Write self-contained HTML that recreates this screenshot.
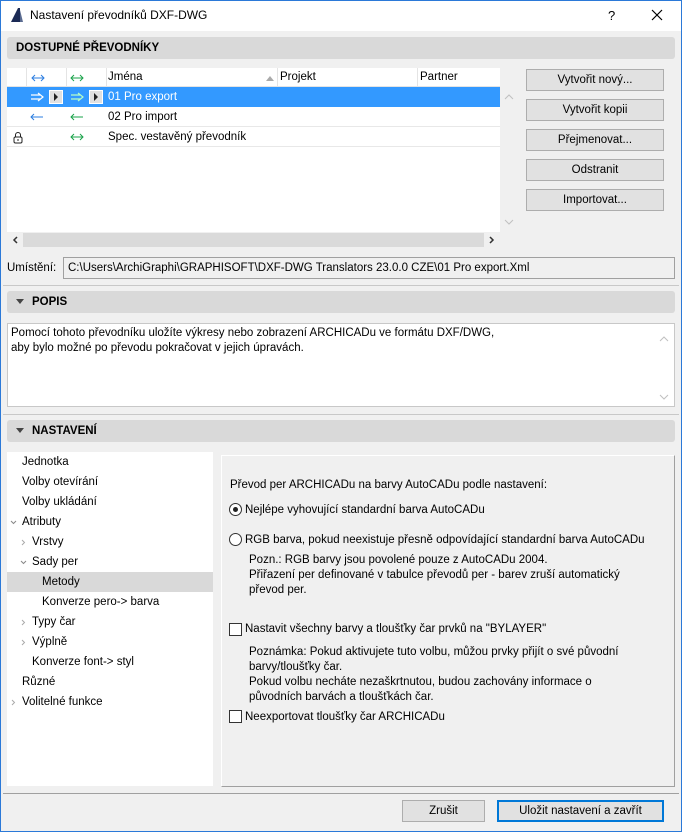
<!DOCTYPE html>
<html><head><meta charset="utf-8"><style>
*{box-sizing:border-box;margin:0;padding:0}
body{width:682px;height:832px;background:#f0f0f0;font-family:"Liberation Sans",sans-serif;font-size:11.5px;color:#000;position:relative;overflow:hidden}
.a{position:absolute;white-space:nowrap}
.win{position:absolute;left:0;top:0;width:682px;height:832px;border:1px solid #2b79d8;pointer-events:none}
.hdr{position:absolute;left:7px;width:668px;height:22px;background:#d9d9d9;border-radius:3px;font-weight:bold;font-size:11.5px;line-height:22px;padding-left:9px}
.hdr .tri{display:inline-block;width:0;height:0;border-left:4px solid transparent;border-right:4px solid transparent;border-top:5px solid #444;margin-right:8px;vertical-align:1px}
.btn{position:absolute;left:526px;width:138px;height:22px;background:#e1e1e1;border:1px solid #adadad;text-align:center;line-height:20px}
.row{position:absolute;left:7px;width:493px;height:20px;line-height:20px;border-bottom:1px solid #e8e8e8}
.tree div{position:absolute;height:20px;line-height:20px;white-space:nowrap}
.rb{display:inline-block;width:13px;height:13px;border:1px solid #333;border-radius:50%;vertical-align:-3px;margin-right:3px;position:relative;background:#fff}
.cb{position:absolute;width:13px;height:13px;border:1px solid #333;background:#fff}
svg.ar{position:absolute}
</style></head><body>
<div class="a" style="left:0;top:0;width:682px;height:31px;background:#fff"></div>
<svg class="a" style="left:9px;top:7px" width="16" height="16"><path d="M2 15 L9 1 L11 1 L11 15 Z" fill="#1b2a55"/><path d="M11 3 L14 15 L11 15Z" fill="#5a6b90"/></svg>
<div class="a" style="left:30px;top:8px;font-size:12px">Nastavení převodníků DXF-DWG</div>
<div class="a" style="left:608px;top:8px;font-size:13px">?</div>
<svg class="a" style="left:651px;top:9px" width="12" height="12"><path d="M1 1L11 11M11 1L1 11" stroke="#000" stroke-width="1.2"/></svg>

<div class="hdr" style="top:37px">DOSTUPNÉ PŘEVODNÍKY</div>

<div class="a" style="left:7px;top:68px;width:493px;height:164px;background:#fff"></div>
<div class="a" style="left:7px;top:68px;width:493px;height:19px;border-bottom:1px solid #e4e4e4"></div>
<div class="a" style="left:26px;top:68px;width:1px;height:19px;background:#e4e4e4"></div>
<div class="a" style="left:66px;top:68px;width:1px;height:19px;background:#e4e4e4"></div>
<div class="a" style="left:106px;top:68px;width:1px;height:19px;background:#e4e4e4"></div>
<div class="a" style="left:277px;top:68px;width:1px;height:19px;background:#e4e4e4"></div>
<div class="a" style="left:417px;top:68px;width:1px;height:19px;background:#e4e4e4"></div>
<svg class="ar" style="left:31px;top:74px" width="14" height="8"><path d="M1 4H13M4 1L1 4L4 7M10 1L13 4L10 7" stroke="#2b7de0" fill="none"/></svg>
<svg class="ar" style="left:70px;top:74px" width="14" height="8"><path d="M1 4H13M4 1L1 4L4 7M10 1L13 4L10 7" stroke="#1aa34a" fill="none"/></svg>
<div class="a" style="left:108px;top:71px">Jména</div>
<div class="a" style="left:266px;top:76px;width:0;height:0;border-left:4px solid transparent;border-right:4px solid transparent;border-bottom:5px solid #aaa"></div>
<div class="a" style="left:280px;top:71px">Projekt</div>
<div class="a" style="left:420px;top:71px">Partner</div>

<div class="row" style="top:87px;background:#3399ff;color:#fff;border:none">
<svg class="ar" style="left:23px;top:5px" width="15" height="10"><path d="M1 3H10M1 7H10M8 1L13 5L8 9" stroke="#fff" fill="none" stroke-width="1.2"/></svg>
<span class="a" style="left:42px;top:3px;width:14px;height:14px;background:#e0e0e0;border:1px solid #fff"></span>
<span class="a" style="left:47px;top:6px;width:0;height:0;border-top:4px solid transparent;border-bottom:4px solid transparent;border-left:4px solid #222"></span>
<svg class="ar" style="left:63px;top:5px" width="15" height="10"><path d="M1 3H10M1 7H10M8 1L13 5L8 9" stroke="#b6ffc8" fill="none" stroke-width="1.2"/></svg>
<span class="a" style="left:82px;top:3px;width:14px;height:14px;background:#e0e0e0;border:1px solid #fff"></span>
<span class="a" style="left:87px;top:6px;width:0;height:0;border-top:4px solid transparent;border-bottom:4px solid transparent;border-left:4px solid #222"></span>
<span class="a" style="left:101px;top:0">01 Pro export</span></div>
<div class="row" style="top:107px">
<svg class="ar" style="left:23px;top:6px" width="14" height="8"><path d="M1 4H13M4 1L1 4L4 7" stroke="#2b7de0" fill="none"/></svg>
<svg class="ar" style="left:63px;top:6px" width="14" height="8"><path d="M1 4H13M4 1L1 4L4 7" stroke="#1aa34a" fill="none"/></svg>
<span class="a" style="left:101px">02 Pro import</span></div>
<div class="row" style="top:127px">
<svg class="ar" style="left:6px;top:4px" width="10" height="13"><path d="M2.5 6V4A2.5 2.5 0 0 1 7.5 4V6" stroke="#222" fill="none"/><rect x="1" y="6" width="8" height="6" rx="1.5" fill="#fff" stroke="#222"/><path d="M5 8V10" stroke="#222"/></svg>
<svg class="ar" style="left:63px;top:6px" width="14" height="8"><path d="M1 4H13M4 1L1 4L4 7M10 1L13 4L10 7" stroke="#1aa34a" fill="none"/></svg>
<span class="a" style="left:101px">Spec. vestavěný převodník</span></div>
<svg class="ar" style="left:504px;top:94px" width="10" height="6"><path d="M1 5L5 1L9 5" stroke="#c0c0c0" fill="none"/></svg>
<svg class="ar" style="left:504px;top:219px" width="10" height="6"><path d="M1 1L5 5L9 1" stroke="#c0c0c0" fill="none"/></svg>
<div class="a" style="left:7px;top:233px;width:493px;height:14px;background:#dadada"></div>
<div class="a" style="left:7px;top:233px;width:16px;height:14px;background:#f0f0f0"></div>
<svg class="ar" style="left:12px;top:236px" width="6" height="8"><path d="M5 1L2 4L5 7" stroke="#333" fill="none" stroke-width="1.5"/></svg>
<div class="a" style="left:484px;top:233px;width:16px;height:14px;background:#f0f0f0"></div>
<svg class="ar" style="left:489px;top:236px" width="6" height="8"><path d="M1 1L4 4L1 7" stroke="#333" fill="none" stroke-width="1.5"/></svg>

<div class="btn" style="top:69px">Vytvořit nový...</div>
<div class="btn" style="top:99px">Vytvořit kopii</div>
<div class="btn" style="top:129px">Přejmenovat...</div>
<div class="btn" style="top:159px">Odstranit</div>
<div class="btn" style="top:189px">Importovat...</div>

<div class="a" style="left:7px;top:262px">Umístění:</div>
<div class="a" style="left:63px;top:257px;width:612px;height:22px;border:1px solid #a0a0a0;background:#f0f0f0;line-height:20px;padding-left:4px">C:\Users\ArchiGraphi\GRAPHISOFT\DXF-DWG Translators 23.0.0 CZE\01 Pro export.Xml</div>
<div class="a" style="left:3px;top:285px;width:676px;height:1px;background:#c8c8c8"></div>

<div class="hdr" style="top:291px"><span class="tri"></span>POPIS</div>
<div class="a" style="left:7px;top:323px;width:668px;height:84px;background:#fff;border:1px solid #c8c8c8;padding:2px 0 0 3px;line-height:15px">Pomocí tohoto převodníku uložíte výkresy nebo zobrazení ARCHICADu ve formátu DXF/DWG,<br>aby bylo možné po převodu pokračovat v jejich úpravách.</div>
<svg class="ar" style="left:659px;top:336px" width="10" height="6"><path d="M1 5L5 1L9 5" stroke="#c0c0c0" fill="none"/></svg>
<svg class="ar" style="left:659px;top:394px" width="10" height="6"><path d="M1 1L5 5L9 1" stroke="#c0c0c0" fill="none"/></svg>
<div class="a" style="left:3px;top:414px;width:676px;height:1px;background:#c8c8c8"></div>

<div class="hdr" style="top:420px"><span class="tri"></span>NASTAVENÍ</div>

<div class="a tree" style="left:7px;top:452px;width:206px;height:334px;background:#fff">
<div style="left:15px;top:0">Jednotka</div>
<div style="left:15px;top:20px">Volby otevírání</div>
<div style="left:15px;top:40px">Volby ukládání</div>
<div style="left:15px;top:60px">Atributy</div>
<div style="left:25px;top:80px">Vrstvy</div>
<div style="left:25px;top:100px">Sady per</div>
<div style="left:0;top:120px;width:206px;background:#d9d9d9;padding-left:35px">Metody</div>
<div style="left:35px;top:140px">Konverze pero-&gt; barva</div>
<div style="left:25px;top:160px">Typy čar</div>
<div style="left:25px;top:180px">Výplně</div>
<div style="left:25px;top:200px">Konverze font-&gt; styl</div>
<div style="left:15px;top:220px">Různé</div>
<div style="left:15px;top:240px">Volitelné funkce</div>
</div>
<svg class="ar" style="left:10px;top:520px" width="7" height="5"><path d="M1 1L3.5 3.5L6 1" stroke="#888" fill="none"/></svg>
<svg class="ar" style="left:21px;top:539px" width="5" height="7"><path d="M1 1L3.5 3.5L1 6" stroke="#aaa" fill="none"/></svg>
<svg class="ar" style="left:20px;top:560px" width="7" height="5"><path d="M1 1L3.5 3.5L6 1" stroke="#888" fill="none"/></svg>
<svg class="ar" style="left:21px;top:619px" width="5" height="7"><path d="M1 1L3.5 3.5L1 6" stroke="#aaa" fill="none"/></svg>
<svg class="ar" style="left:21px;top:639px" width="5" height="7"><path d="M1 1L3.5 3.5L1 6" stroke="#aaa" fill="none"/></svg>
<svg class="ar" style="left:11px;top:699px" width="5" height="7"><path d="M1 1L3.5 3.5L1 6" stroke="#aaa" fill="none"/></svg>

<div class="a" style="left:221px;top:455px;width:454px;height:332px;border:1px solid;border-color:#fff #a0a0a0 #a0a0a0 #fff"></div>
<div class="a" style="left:230px;top:479px">Převod per ARCHICADu na barvy AutoCADu podle nastavení:</div>
<div class="a" style="left:229px;top:503px"><span class="rb"><span style="position:absolute;left:3px;top:3px;width:5px;height:5px;border-radius:50%;background:#222"></span></span>Nejlépe vyhovující standardní barva AutoCADu</div>
<div class="a" style="left:229px;top:533px"><span class="rb"></span>RGB barva, pokud neexistuje přesně odpovídající standardní barva AutoCADu</div>
<div class="a" style="left:249px;top:553px;line-height:15px">Pozn.: RGB barvy jsou povolené pouze z AutoCADu 2004.<br>Přiřazení per definované v tabulce převodů per - barev zruší automatický<br>převod per.</div>
<div class="cb" style="left:229px;top:623px"></div>
<div class="a" style="left:245px;top:623px">Nastavit všechny barvy a tloušťky čar prvků na "BYLAYER"</div>
<div class="a" style="left:249px;top:645px;line-height:15px">Poznámka: Pokud aktivujete tuto volbu, můžou prvky přijít o své původní<br>barvy/tloušťky čar.<br>Pokud volbu necháte nezaškrtnutou, budou zachovány informace o<br>původních barvách a tloušťkách čar.</div>
<div class="cb" style="left:229px;top:710px"></div>
<div class="a" style="left:245px;top:711px">Neexportovat tloušťky čar ARCHICADu</div>

<div class="a" style="left:3px;top:793px;width:676px;height:1px;background:#a0a0a0"></div>
<div class="a" style="left:402px;top:800px;width:83px;height:22px;background:#e1e1e1;border:1px solid #adadad;text-align:center;line-height:20px">Zrušit</div>
<div class="a" style="left:497px;top:800px;width:167px;height:22px;background:#e1e1e1;border:2px solid #0078d7;text-align:center;line-height:18px">Uložit nastavení a zavřít</div>
<div class="win"></div>
</body></html>
